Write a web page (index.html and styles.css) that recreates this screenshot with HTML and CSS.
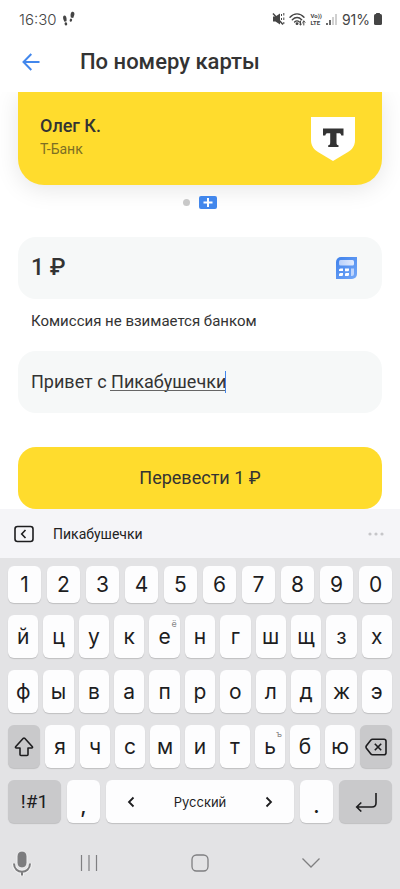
FILE: index.html
```html
<!DOCTYPE html>
<html lang="ru">
<head>
<meta charset="utf-8">
<meta name="viewport" content="width=device-width, initial-scale=1">
<title>По номеру карты</title>
<link rel="stylesheet" href="styles.css">
</head>
<body>
<div class="status">
  <span class="clock">16:30</span>
  <svg class="steps" width="14" height="16" viewBox="0 0 14 16" fill="#454545"><path d="M1.3 5.3C1.8 4.3 3.4 4.300 4 5.500C4.700 7 4.700 8.500 4.500 10.200L2.400 10.700C1.800 9 .5 7.500 1.300 5.300z"/><ellipse cx="3.900" cy="12.900" rx="1.300" ry="1.700" transform="rotate(-15 3.900 12.900)"/><path d="M9 2C9.500 .5 11.500 .3 12.200 1.700C13 3.500 11.700 5 11.200 7L8.800 6.400C8.500 4.500 8.400 3.500 9 2z"/><ellipse cx="8.900" cy="9.200" rx="1.200" ry="1.600" transform="rotate(20 8.900 9.200)"/></svg>
  <div class="status-right">
    <svg width="13" height="14" viewBox="0 0 13 14"><path d="M1 4.500h2.500L8 1.500v11L3.500 9.500H1z" fill="#454545"/><path d="M1 1.500l10 11" stroke="#454545" stroke-width="1.500"/><path d="M9.500 2v2M9.500 6v2M11.800 1v2.500M11.800 5.500v2.500M11.800 10v2" stroke="#454545" stroke-width="1"/></svg>
    <svg width="17" height="14" viewBox="0 0 17 14" fill="none" stroke="#454545" stroke-width="1.400" stroke-linecap="round"><path d="M1 5.200C5 .7 11 .7 15 5.200M3.300 7.700c3-3 6.500-3 9.400 0M5.600 10c1.500-1.400 3.300-1.400 4.800 0"/><circle cx="8" cy="11.700" r=".7" fill="#454545"/><path d="M11.500 9v4m-1.200-1.200 1.200 1.200 1.200-1.200M14.800 13V9m-1.200 1.200L14.800 9 16 10.200" stroke-width="1"/></svg>
    <span class="volte"><span>Vo))</span><span>LTE</span></span>
    <svg width="12" height="13" viewBox="0 0 12 13"><path d="M1 10v2M4 7v5" stroke="#454545" stroke-width="1.600"/><path d="M7 4v8M10 1v11" stroke="#c5c5c5" stroke-width="1.600"/></svg>
    <span class="percent">91%</span>
    <svg width="8" height="12" viewBox="0 0 8 12" fill="#454545"><rect y="1" width="8" height="11" rx="1.500"/><rect x="2" width="4" height="2" rx=".5"/></svg>
  </div>
</div>

<header class="header">
  <button class="plain" aria-label="Назад"><svg width="18" height="18" viewBox="0 0 18 18" fill="none" stroke="#4287ec" stroke-width="2"><path d="M17.500 9H2M9.300 1L1.500 9l7.800 8"/></svg></button>
  <h1>По номеру карты</h1>
</header>

<main class="main">
  <div class="card-clip">
    <section class="card">
      <div class="holder">
        <p class="name">Олег К.</p>
        <p class="bank">Т-Банк</p>
      </div>
      <svg width="44" height="44" viewBox="0 0 44 44"><path d="M0 0h44v23c0 6-3 9.500-7 12L22 44 7 35c-4-2.500-7-6-7-12z" fill="#fff"/><path d="M12 11.500h20.500v7h-2.200c-.3-1.700-1-2.300-2.300-2.300h-2.500V25c0 2.500.3 3 2 3.200v1.800H17.200v-1.800c1.700-.2 2-.7 2-3.200v-8.800h-2.500c-1.300 0-2 .6-2.400 2.300H12z" fill="#333"/></svg>
    </section>
    <div class="pager">
      <span class="dot"></span>
      <button class="plain" aria-label="Добавить карту"><svg width="18" height="13" viewBox="0 0 18 13"><rect width="18" height="13" rx="2" fill="#4287ec"/><path d="M4.500 6.500h9M9 2v9" stroke="#fff" stroke-width="2"/></svg></button>
    </div>
  </div>

  <div class="field">
    <input class="amount" aria-label="Сумма" value="1 ₽">
    <button class="plain" aria-label="Калькулятор"><svg width="21" height="22" viewBox="0 0 21 22"><defs><linearGradient id="g" x1="0" y1="0" x2="1" y2="0"><stop stop-color="#b9d0fa"/><stop offset="1" stop-color="#e2ecfe"/></linearGradient><linearGradient id="b" x1="0" y1="0" x2="1" y2="1"><stop stop-color="#3f82ec"/><stop offset="1" stop-color="#75a8f7"/></linearGradient></defs><path d="M5 0h16v17a5 5 0 0 1-5 5H0V5a5 5 0 0 1 5-5z" fill="url(#b)"/><rect x="3" y="3" width="15" height="5.500" rx="1.500" fill="url(#g)"/><path d="M15 11.500h3V17q0 2-2 2h-1z" fill="#bfd5fc"/><g fill="#fff"><path d="M4.500 11.500H7V14H3v-1q0-1.500 1.500-1.500zM9 11.500h4V13q0 1.200-1.200 1.200H9zM4.500 16H7v1.700Q7 19 5.700 19H3v-1.500Q3 16 4.500 16zM10.300 16H13v1.700Q13 19 11.700 19H9v-1.700Q9 16 10.300 16z"/></g></svg></button>
  </div>
  <p class="note">Комиссия не взимается банком</p>
  <div class="field">
    <input class="message" aria-label="Сообщение" value="Привет с Пикабушечки">
    <span class="composing"></span>
  </div>
  <button class="submit">Перевести 1 ₽</button>
</main>

<section class="suggest">
  <button class="plain" aria-label="Свернуть панель"><svg width="20" height="18" viewBox="0 0 20 18" fill="none" stroke="#1d1d1f" stroke-width="1.600"><rect x="1" y="1.500" width="18" height="15" rx="2.500"/><path d="M11.500 5L7.700 9l3.800 4"/></svg></button>
  <button class="plain word">Пикабушечки</button>
  <button class="plain" aria-label="Ещё"><svg width="16" height="4" viewBox="0 0 16 4" fill="#c6c6c9"><circle cx="2" cy="2" r="1.600"/><circle cx="8" cy="2" r="1.600"/><circle cx="14" cy="2" r="1.600"/></svg></button>
</section>

<section class="keyboard">
  <div class="row digits"><button>1</button><button>2</button><button>3</button><button>4</button><button>5</button><button>6</button><button>7</button><button>8</button><button>9</button><button>0</button></div>
  <div class="row"><button>й</button><button>ц</button><button>у</button><button>к</button><button>е<span class="alt">ё</span></button><button>н</button><button>г</button><button>ш</button><button>щ</button><button>з</button><button>х</button></div>
  <div class="row"><button>ф</button><button>ы</button><button>в</button><button>а</button><button>п</button><button>р</button><button>о</button><button>л</button><button>д</button><button>ж</button><button>э</button></div>
  <div class="row">
    <button class="dark edge" aria-label="Shift"><svg width="20" height="20" viewBox="0 0 20 20" fill="none" stroke="#1d1d1f" stroke-width="1.600" stroke-linejoin="round"><path d="M9.300 1.300L1.600 9.800Q1.200 11 2.300 11H6v6.500q0 1 1 1h6q1 0 1-1V11h3.700q1.100 0 .7-1.200L10.700 1.300q-.7-.6-1.400 0z"/></svg></button>
    <button>я</button><button>ч</button><button>с</button><button>м</button><button>и</button><button>т</button><button>ь<span class="alt">ъ</span></button><button>б</button><button>ю</button>
    <button class="dark edge" aria-label="Удалить"><svg width="22" height="18" viewBox="0 0 22 18" fill="none" stroke="#1d1d1f" stroke-width="1.600" stroke-linejoin="round"><path d="M7.500 1.200H19q2 0 2 2v11.600q0 2-2 2H7.500q-1 0-1.600-.8L1.400 10.200q-.8-1.200 0-2.400L5.900 2q.6-.8 1.600-.8z"/><path d="M9.800 5.700l6.400 6.600M16.200 5.700l-6.400 6.600"/></svg></button>
  </div>
  <div class="row bottom">
    <button class="dark wide symbols">!#1</button>
    <button class="punct">,</button>
    <button class="space"><svg width="8" height="12" viewBox="0 0 8 12"><path d="M6.500 1.500L2 6l4.500 4.500"/></svg><span>Русский</span><svg width="8" height="12" viewBox="0 0 8 12"><path d="M1.500 1.500L6 6l-4.500 4.500"/></svg></button>
    <button class="punct">.</button>
    <button class="dark wide" aria-label="Ввод"><svg width="22" height="20" viewBox="0 0 22 20" fill="none" stroke="#1d1d1f" stroke-width="1.600"><path d="M21 1v10q0 4-4 4H2M6.300 10.500L1.700 15l4.600 4.500"/></svg></button>
  </div>
</section>

<nav class="nav">
  <button class="plain" aria-label="Голосовой ввод"><svg width="22" height="28" viewBox="0 0 22 28" fill="none"><path d="M3 14.500c0 11 16 11 16 0M11 22.500V27" stroke="#f1f1f2" stroke-width="4"/><rect x="6" y="2" width="10" height="17" rx="5" fill="#7c7c7e" stroke="#f1f1f2"/><path d="M3 14.500c0 11 16 11 16 0M11 22.500V26.500" stroke="#7c7c7e" stroke-width="2"/></svg></button>
  <button class="plain" aria-label="Недавние"><svg width="18" height="18" viewBox="0 0 18 18" stroke="#7f7f81" stroke-width="1.200"><path d="M1.500 1v16M9 1v16M16.500 1v16"/></svg></button>
  <button class="plain" aria-label="Домой"><svg width="18" height="18" viewBox="0 0 18 18" fill="none" stroke="#7f7f81" stroke-width="1.300"><rect x="1" y="1" width="16" height="16" rx="4.500"/></svg></button>
  <button class="plain" aria-label="Скрыть клавиатуру"><svg width="18" height="10" viewBox="0 0 18 10" fill="none" stroke="#7f7f81" stroke-width="1.300"><path d="M.5 .5L9 9l8.500-8.500"/></svg></button>
</nav>
</body>
</html>
```
FILE: styles.css
```css
* { box-sizing: border-box; }
body {
  margin: 0;
  min-height: 100vh;
  display: flex;
  flex-direction: column;
  background: #fff;
  color: #333;
  font-family: Roboto, "Liberation Sans", sans-serif;
}
h1, p { margin: 0; }
svg { display: block; flex: none; }
button, input { font: inherit; color: inherit; }
button { border: 0; padding: 0; }
.plain { background: none; }

.status {
  display: flex;
  align-items: center;
  height: 38px;
  padding: 0 18px 0 19px;
  color: #454545;
}
.clock { font-size: 15px; font-weight: 300; font-family: Inter, sans-serif; }
.steps { margin-left: 5px; }
.status-right { display: flex; align-items: center; gap: 4px; margin-left: auto; }
.volte {
  display: flex;
  flex-direction: column;
  font-size: 6px;
  line-height: 7px;
  font-weight: 700;
}
.percent { font-size: 14px; font-family: Inter, sans-serif; }

.header {
  display: flex;
  align-items: center;
  gap: 40px;
  height: 54px;
  padding: 0 22px 6px;
}
h1 { font-size: 22px; line-height: 28px; font-weight: 500; }

.main { padding: 0 18px; display: flex; flex-direction: column; }
.card-clip { overflow: hidden; margin: 0 -18px; padding: 0 18px; height: 145px; }
.card {
  display: flex;
  align-items: center;
  justify-content: space-between;
  height: 93px;
  padding: 0 27px 0 22px;
  border-radius: 0 0 26px 26px;
  background: #ffdc2d;
  box-shadow: 0 4px 24px rgba(0, 0, 0, .1);
}
.holder { padding-bottom: 4px; }
.name { font-size: 18px; line-height: 24px; font-weight: 500; }
.bank { font-size: 14px; line-height: 22px; color: #7d6f24; }
.pager {
  position: relative;
  display: flex;
  align-items: center;
  justify-content: center;
  gap: 9px;
  height: 34px;
}
.dot { width: 7px; height: 7px; border-radius: 50%; background: #c8c8c8; }

.field {
  position: relative;
  display: flex;
  align-items: center;
  height: 62px;
  padding: 0 25px 0 13px;
  border-radius: 18px;
  background: #f6f8f8;
}
.field input {
  flex: 1;
  min-width: 0;
  padding: 0 0 2px;
  border: 0;
  outline: 0;
  background: none;
}
.field .amount { font-size: 23px; font-weight: 500; }
.field .message { font-size: 18px; }
.composing {
  position: absolute;
  left: 92px;
  top: 20px;
  width: 116px;
  height: 22px;
  border-right: 1px solid #4287ec;
  background: linear-gradient(#666, #666) 0 19px / 115px 1px no-repeat;
}
.note { padding: 12px 13px 20px; font-size: 15px; line-height: 20px; }
.submit {
  height: 62px;
  margin-top: 34px;
  padding-bottom: 2px;
  border-radius: 18px;
  background: #ffdc2d;
  font-size: 18px;
}

.suggest {
  display: flex;
  align-items: center;
  height: 49px;
  padding: 0 16px 0 14px;
  background: #f5f5f8;
}
.word { margin: 0 auto 0 19px; font-size: 14px; color: #222; }

.keyboard {
  display: flex;
  flex-direction: column;
  gap: 12px;
  padding: 8px 8px 0;
  background: #e3e3e5;
  color: #1d1d1f;
  font-family: Inter, sans-serif;
}
.row { display: flex; gap: 5px; height: 43px; }
.row button {
  position: relative;
  flex: 1;
  display: flex;
  align-items: center;
  justify-content: center;
  border-radius: 6px;
  background: #fdfdfe;
  box-shadow: 0 1px 1px rgba(0, 0, 0, .16);
  font-size: 21px;
}
.row.digits { gap: 6px; height: 37px; }
.row.bottom { gap: 6px; }
.alt { position: absolute; top: 3px; right: 3px; font-size: 9px; line-height: 11px; color: #888; }
.row .dark { background: #c9c9cb; }
.row .edge { flex: 0 0 32px; }
.row .wide { flex: 0 0 53px; }
.row .symbols { font-size: 19px; font-family: Roboto, sans-serif; }
.row .punct { flex: 0 0 33px; align-items: flex-end; padding-bottom: 5px; font-weight: 500; }
.row .space { justify-content: space-between; padding: 0 21px; font-size: 13px; }
.space svg { fill: none; stroke: #1d1d1f; stroke-width: 1.800; }

.nav {
  flex: 1;
  display: grid;
  grid-template-columns: 22px 1fr 1fr 1fr;
  min-height: 66px;
  padding: 14px 34px 0 11px;
  background: #e3e3e5;
}
.nav button { display: flex; align-items: center; justify-content: center; }
```
